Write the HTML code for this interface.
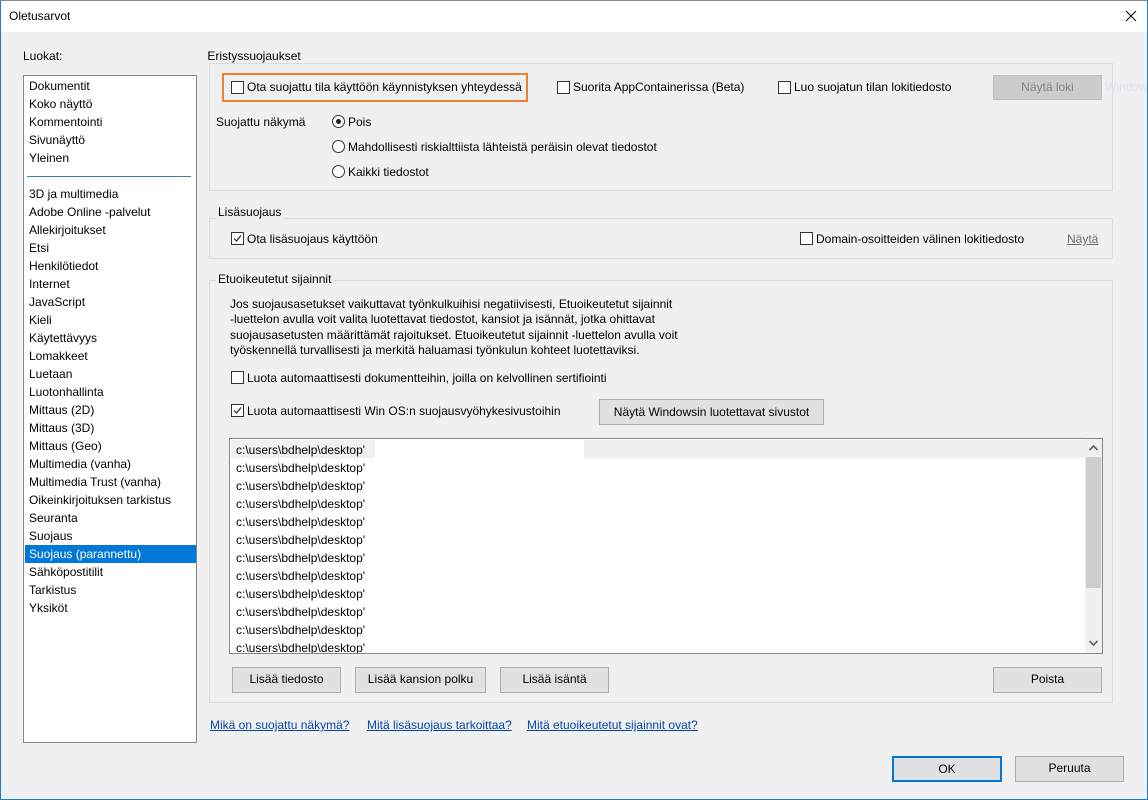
<!DOCTYPE html>
<html><head><meta charset="utf-8"><style>
*{margin:0;padding:0;box-sizing:border-box}
body{width:1148px;height:800px;background:#f0f0f0;font-family:"Liberation Sans",sans-serif;font-size:12px;color:#000;position:relative;overflow:hidden}
.a{position:absolute;white-space:nowrap;line-height:14px}
.win{position:absolute;left:0;top:0;width:1148px;height:800px;border:1px solid #1a7fd4;border-top-color:#8a8a8a;pointer-events:none}
.title{position:absolute;left:0;top:0;width:1148px;height:32px;background:#fff}
.grp{position:absolute;border:1px solid #dcdcdc}
.leg{position:absolute;background:#f0f0f0;padding:0 2px;line-height:14px}
.cb{position:absolute;width:13px;height:13px;border:1px solid #333;background:#fff}
.rb{position:absolute;width:13px;height:13px;border:1px solid #333;border-radius:50%;background:#fff}
.btn{position:absolute;background:#e1e1e1;border:1px solid #adadad;text-align:center;line-height:23px}
.lnk{position:absolute;color:#0645ad;text-decoration:underline;line-height:14px;white-space:nowrap}
.li{position:absolute;left:5px;line-height:18px;height:18px;width:167px;padding-left:0}
</style></head><body>
<div class="title"></div>
<div class="a" style="left:9px;top:9px">Oletusarvot</div>
<svg class="a" style="left:1125px;top:10px" width="12" height="12"><path d="M1 1L11 11M11 1L1 11" stroke="#000" stroke-width="1"/></svg>

<div class="a" style="left:23px;top:49px">Luokat:</div>
<div style="position:absolute;left:23px;top:75px;width:174px;height:668px;background:#fff;border:1px solid #828790">
<div class="li" style="top:1px">Dokumentit</div>
<div class="li" style="top:19px">Koko näyttö</div>
<div class="li" style="top:37px">Kommentointi</div>
<div class="li" style="top:55px">Sivunäyttö</div>
<div class="li" style="top:73px">Yleinen</div>
<div style="position:absolute;left:3px;top:100px;width:164px;height:1px;background:#3c7fb1"></div>
<div class="li" style="top:109px">3D ja multimedia</div>
<div class="li" style="top:127px">Adobe Online -palvelut</div>
<div class="li" style="top:145px">Allekirjoitukset</div>
<div class="li" style="top:163px">Etsi</div>
<div class="li" style="top:181px">Henkilötiedot</div>
<div class="li" style="top:199px">Internet</div>
<div class="li" style="top:217px">JavaScript</div>
<div class="li" style="top:235px">Kieli</div>
<div class="li" style="top:253px">Käytettävyys</div>
<div class="li" style="top:271px">Lomakkeet</div>
<div class="li" style="top:289px">Luetaan</div>
<div class="li" style="top:307px">Luotonhallinta</div>
<div class="li" style="top:325px">Mittaus (2D)</div>
<div class="li" style="top:343px">Mittaus (3D)</div>
<div class="li" style="top:361px">Mittaus (Geo)</div>
<div class="li" style="top:379px">Multimedia (vanha)</div>
<div class="li" style="top:397px">Multimedia Trust (vanha)</div>
<div class="li" style="top:415px">Oikeinkirjoituksen tarkistus</div>
<div class="li" style="top:433px">Seuranta</div>
<div class="li" style="top:451px">Suojaus</div>
<div class="li" style="top:469px;left:1px;width:171px;padding-left:4px;background:#0078d7;color:#fff">Suojaus (parannettu)</div>
<div class="li" style="top:487px">Sähköpostitilit</div>
<div class="li" style="top:505px">Tarkistus</div>
<div class="li" style="top:523px">Yksiköt</div>
</div>

<!-- Eristyssuojaukset -->
<div class="grp" style="left:209px;top:63px;width:904px;height:128px"></div>
<div class="leg" style="left:202px;top:49px">&nbsp;Eristyssuojaukset</div>
<div style="position:absolute;left:222px;top:73px;width:306px;height:29px;border:2px solid #f0802e"></div>
<div class="cb" style="left:231px;top:81px"></div>
<div class="a" style="left:247px;top:80px">Ota suojattu tila käyttöön käynnistyksen yhteydessä</div>
<div class="cb" style="left:557px;top:81px"></div>
<div class="a" style="left:573px;top:80px">Suorita AppContainerissa (Beta)</div>
<div class="cb" style="left:778px;top:81px"></div>
<div class="a" style="left:794px;top:80px">Luo suojatun tilan lokitiedosto</div>
<div class="btn" style="left:993px;top:75px;width:109px;height:25px;background:#cccccc;border-color:#bfbfbf;color:#838383">Näytä loki</div>
<div class="a" style="left:1105px;top:80px;color:#dde3ea">Window</div>
<div class="a" style="left:216px;top:115px">Suojattu näkymä</div>
<div class="rb" style="left:332px;top:115px"></div><div style="position:absolute;left:336px;top:119px;width:5px;height:5px;border-radius:50%;background:#222"></div>
<div class="a" style="left:348px;top:115px">Pois</div>
<div class="rb" style="left:332px;top:140px"></div>
<div class="a" style="left:348px;top:140px">Mahdollisesti riskialttiista lähteistä peräisin olevat tiedostot</div>
<div class="rb" style="left:332px;top:165px"></div>
<div class="a" style="left:348px;top:165px">Kaikki tiedostot</div>

<!-- Lisäsuojaus -->
<div class="grp" style="left:209px;top:218px;width:904px;height:41px"></div>
<div class="leg" style="left:216px;top:205px">Lisäsuojaus</div>
<div class="cb" style="left:231px;top:232px"></div>
<svg class="a" style="left:232px;top:233px" width="11" height="11"><path d="M2 5.5L4.5 8L9 2.5" stroke="#222" fill="none" stroke-width="1.2"/></svg>
<div class="a" style="left:247px;top:232px">Ota lisäsuojaus käyttöön</div>
<div class="cb" style="left:800px;top:232px"></div>
<div class="a" style="left:816px;top:232px">Domain-osoitteiden välinen lokitiedosto</div>
<div class="lnk" style="left:1067px;top:232px;color:#6d6d6d">Näytä</div>

<!-- Etuoikeutetut -->
<div class="grp" style="left:209px;top:280px;width:904px;height:423px"></div>
<div class="leg" style="left:216px;top:272px">Etuoikeutetut sijainnit</div>
<div class="a" style="left:230px;top:297px;line-height:15.4px">Jos suojausasetukset vaikuttavat työnkulkuihisi negatiivisesti, Etuoikeutetut sijainnit<br>-luettelon avulla voit valita luotettavat tiedostot, kansiot ja isännät, jotka ohittavat<br>suojausasetusten määrittämät rajoitukset. Etuoikeutetut sijainnit -luettelon avulla voit<br>työskennellä turvallisesti ja merkitä haluamasi työnkulun kohteet luotettaviksi.</div>
<div class="cb" style="left:231px;top:371px"></div>
<div class="a" style="left:247px;top:371px">Luota automaattisesti dokumentteihin, joilla on kelvollinen sertifiointi</div>
<div class="cb" style="left:231px;top:404px"></div>
<svg class="a" style="left:232px;top:405px" width="11" height="11"><path d="M2 5.5L4.5 8L9 2.5" stroke="#222" fill="none" stroke-width="1.2"/></svg>
<div class="a" style="left:247px;top:404px">Luota automaattisesti Win OS:n suojausvyöhykesivustoihin</div>
<div class="btn" style="left:599px;top:399px;width:225px;height:26px;line-height:24px">Näytä Windowsin luotettavat sivustot</div>

<div style="position:absolute;left:229px;top:438px;width:874px;height:216px;background:#fff;border:1px solid #828790;overflow:hidden">
<div style="position:absolute;left:1px;top:1px;width:854px;height:18px;background:#f0f0f0"></div>
<div style="position:absolute;left:145px;top:1px;width:209px;height:18px;background:#fff"></div>
<div class="a" style="left:6px;top:2px;line-height:18px">c:\users\bdhelp\desktop'<br>c:\users\bdhelp\desktop'<br>c:\users\bdhelp\desktop'<br>c:\users\bdhelp\desktop'<br>c:\users\bdhelp\desktop'<br>c:\users\bdhelp\desktop'<br>c:\users\bdhelp\desktop'<br>c:\users\bdhelp\desktop'<br>c:\users\bdhelp\desktop'<br>c:\users\bdhelp\desktop'<br>c:\users\bdhelp\desktop'<br>c:\users\bdhelp\desktop'</div>
<div style="position:absolute;left:855px;top:0;width:17px;height:214px;background:#f0f0f0"></div>
<div style="position:absolute;left:856px;top:18px;width:15px;height:131px;background:#cdcdcd"></div>
<svg class="a" style="left:858px;top:5px" width="11" height="8"><path d="M1.5 6L5.5 2L9.5 6" stroke="#606060" fill="none" stroke-width="1.6"/></svg>
<svg class="a" style="left:858px;top:200px" width="11" height="8"><path d="M1.5 2L5.5 6L9.5 2" stroke="#606060" fill="none" stroke-width="1.6"/></svg>
</div>

<div class="btn" style="left:232px;top:667px;width:109px;height:26px">Lisää tiedosto</div>
<div class="btn" style="left:355px;top:667px;width:131px;height:26px">Lisää kansion polku</div>
<div class="btn" style="left:500px;top:667px;width:109px;height:26px">Lisää isäntä</div>
<div class="btn" style="left:993px;top:667px;width:109px;height:26px">Poista</div>

<div class="lnk" style="left:210px;top:718px">Mikä on suojattu näkymä?</div>
<div class="lnk" style="left:367px;top:718px">Mitä lisäsuojaus tarkoittaa?</div>
<div class="lnk" style="left:527px;top:718px">Mitä etuoikeutetut sijainnit ovat?</div>

<div class="btn" style="left:892px;top:756px;width:110px;height:26px;border:2px solid #0078d7;line-height:22px">OK</div>
<div class="btn" style="left:1015px;top:756px;width:109px;height:26px">Peruuta</div>
<div class="win"></div>
</body></html>
